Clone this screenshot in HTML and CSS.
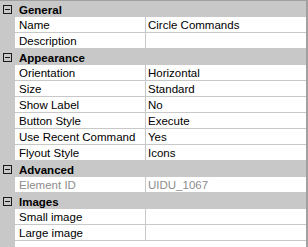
FILE: index.html
```html
<!DOCTYPE html>
<html>
<head>
<meta charset="utf-8">
<link rel="stylesheet" href="styles.css">
</head>
<body>
<div class="grid">
  <div class="cat"><span class="box"></span><span class="cat-name">General</span></div>
  <div class="row"><div class="name">Name</div><div class="val">Circle Commands</div></div>
  <div class="row"><div class="name">Description</div><div class="val"></div></div>
  <div class="cat"><span class="box"></span><span class="cat-name">Appearance</span></div>
  <div class="row"><div class="name">Orientation</div><div class="val">Horizontal</div></div>
  <div class="row"><div class="name">Size</div><div class="val">Standard</div></div>
  <div class="row"><div class="name">Show Label</div><div class="val">No</div></div>
  <div class="row"><div class="name">Button Style</div><div class="val">Execute</div></div>
  <div class="row"><div class="name">Use Recent Command</div><div class="val">Yes</div></div>
  <div class="row"><div class="name">Flyout Style</div><div class="val">Icons</div></div>
  <div class="cat"><span class="box"></span><span class="cat-name">Advanced</span></div>
  <div class="row ro"><div class="name">Element ID</div><div class="val">UIDU_1067</div></div>
  <div class="cat"><span class="box"></span><span class="cat-name">Images</span></div>
  <div class="row"><div class="name">Small image</div><div class="val"></div></div>
  <div class="row"><div class="name">Large image</div><div class="val"></div></div>
  <div class="filler"></div>
</div>
</body>
</html>
```
FILE: styles.css
```css
html, body {
  margin: 0;
  padding: 0;
  background: #ffffff;
}
body {
  width: 308px;
  height: 247px;
  overflow: hidden;
  font-family: "Liberation Sans", Arial, sans-serif;
  font-size: 11.5px;
  color: #000;
}
.grid {
  box-sizing: border-box;
  width: 308px;
  height: 247px;
  border-top: 1px solid #a0a0a0;
  border-right: 2px solid #a0a0a0;
  background: linear-gradient(to right, #c8c8c8 15px, #ffffff 15px);
  display: flex;
  flex-direction: column;
}
.cat {
  height: 16px;
  background: #c8c8c8;
  display: flex;
  align-items: center;
  flex: none;
}
.box {
  box-sizing: border-box;
  width: 9px;
  height: 9px;
  border: 1px solid #1a1a1a;
  margin-left: 3px;
  position: relative;
  flex: none;
}
.box::after {
  content: "";
  position: absolute;
  left: 1px;
  top: 3px;
  width: 5px;
  height: 1px;
  background: #1a1a1a;
}
.cat-name {
  font-weight: bold;
  margin-left: 7px;
  line-height: 16px;
  padding-top: 1px;
}
.row {
  height: 16px;
  flex: none;
  display: grid;
  grid-template-columns: 130px 1fr;
  column-gap: 1px;
  padding-left: 15px;
  padding-bottom: 1px;
  box-sizing: border-box;
  background: #c8c8c8;
}
.name, .val {
  box-sizing: border-box;
  background: #ffffff;
  line-height: 15px;
  padding-top: 1px;
  white-space: nowrap;
  overflow: hidden;
}
.name { padding-left: 4px; }
.val { padding-left: 2px; }
.ro .name, .ro .val { color: #8d8d8d; }
.filler { flex: 1; }
```
